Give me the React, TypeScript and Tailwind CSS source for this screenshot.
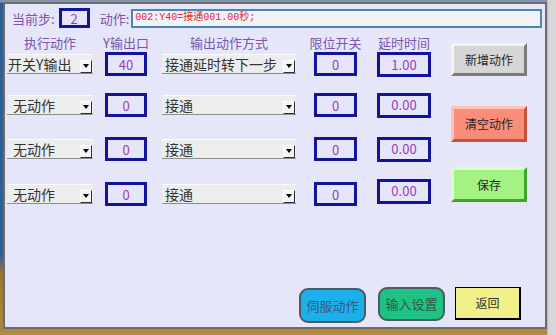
import { FC, ReactNode } from "react";

const font = "font-['Noto_Sans_CJK_SC',sans-serif]";

interface propsCombo {
  label: string;
  className: string;
  textClass?: string;
}

const Combo: FC<propsCombo> = ({ label, className, textClass = "pl-[5px]" }) => {
  return (
    <div
      className={`flex items-center h-[20px] bg-[#ededed] border-t border-t-[#fbfbfb] border-b border-b-[#8c8c8c] ${className}`}
    >
      <span className={`text-[14px] leading-none text-[#333] whitespace-nowrap ${textClass}`}>{label}</span>
      <span className="ml-auto mr-[1px] mt-[4px] w-[12px] h-[13px] flex items-center justify-center bg-[#f4f4f4] border-t border-l border-white border-r border-b border-r-[#303030] border-b-[#303030]">
        <span className="w-0 h-0 border-l-[3px] border-r-[3px] border-t-[4px] border-l-transparent border-r-transparent border-t-black" />
      </span>
    </div>
  );
};

interface propsBox {
  value: string;
  className: string;
  top?: boolean;
}

const ValueBox: FC<propsBox> = ({ value, className, top }) => {
  return (
    <div
      className={`flex justify-center border-[3px] border-[#14149a] bg-[#e6e6fa] text-[13px] leading-none text-[#9a3cb8] ${top ? "items-start pt-[2px]" : "items-center"} ${className}`}
    >
      {value}
    </div>
  );
};

const BevelButton: FC<{ children: ReactNode; className: string }> = ({ children, className }) => {
  return (
    <button className={`w-[76px] flex items-center justify-center border-[3px] ${className}`}>
      <span className="text-[12px] leading-none text-[#262626]">{children}</span>
    </button>
  );
};

const Head: FC<{ children: ReactNode; className: string }> = ({ children, className }) => {
  return <span className={`flex justify-center whitespace-nowrap ${className}`}>{children}</span>;
};

const rows = [
  { act: "开关Y输出", out: "40", mode: "接通延时转下一步", limit: "0", delay: "1.00" },
  { act: "无动作", out: "0", mode: "接通", limit: "0", delay: "0.00" },
  { act: "无动作", out: "0", mode: "接通", limit: "0", delay: "0.00" },
  { act: "无动作", out: "0", mode: "接通", limit: "0", delay: "0.00" },
];

const rowMargins = ["mt-[2px]", "mt-[15px]", "mt-[18px]", "mt-[19px]"];

export default function App() {
  return (
    <div
      className={`w-[556px] h-[335px] flex overflow-hidden bg-[linear-gradient(to_bottom,#7f95ad_0px,#7f95ad_2px,#2f5f8f_3px,#2f5f8f_255px,#9a7634_275px,#b08a40_335px)] ${font}`}
    >
      <div className="ml-[3px] mt-[2px] w-[544px] h-[327px] shrink-0 border-2 border-[#6c6c6c] bg-[#e6e6fa] flex flex-col">
        {/* top line */}
        <div className="flex items-center mt-[4px] h-[20px]">
          <span className="ml-[7px] text-[13px] text-[#7a55aa] leading-none">当前步:</span>
          <div className="ml-[4px] w-[31px] h-[20px] flex items-center justify-center border-[3px] border-[#14149a] text-[13px] leading-none text-[#9a3cb8]">
            2
          </div>
          <span className="ml-[10px] text-[13px] text-[#7a55aa] leading-none">动作:</span>
          <div className="ml-[2px] w-[411px] h-[19px] flex items-center border-2 border-[#4f86ae] bg-[#f1f1f8] pl-[2px]">
            <span className="font-['Liberation_Mono','Noto_Sans_CJK_SC',monospace] text-[10px] leading-none text-[#e02828]">
              002:Y40=接通001.00秒;
            </span>
          </div>
        </div>

        <div className="flex">
          {/* table */}
          <div className="flex flex-col">
            <div className="flex items-center h-[14px] mt-[7px] text-[13px] leading-none text-[#7a55aa]">
              <Head className="ml-[2px] w-[86px]">执行动作</Head>
              <Head className="ml-[12px] w-[42px]">Y输出口</Head>
              <Head className="ml-[15px] w-[134px]">输出动作方式</Head>
              <Head className="ml-[18px] w-[43px]">限位开关</Head>
              <Head className="ml-[20px] w-[54px]">延时时间</Head>
            </div>
            {rows.map((r, i) => (
              <div key={i} className={`flex items-center h-[26px] ${rowMargins[i]}`}>
                <Combo
                  label={r.act}
                  className="ml-[2px] w-[86px]"
                  textClass={i === 0 ? "pl-[1px]" : "pl-[6px]"}
                />
                <ValueBox value={r.out} className="ml-[12px] w-[42px] h-[24px]" />
                <Combo label={r.mode} className="ml-[15px] w-[134px]" textClass="pl-[3px]" />
                <ValueBox value={r.limit} className="ml-[18px] w-[43px] h-[24px]" />
                <ValueBox
                  value={r.delay}
                  top={i > 0}
                  className={`ml-[20px] w-[54px] h-[25px] ${i === 3 ? "mb-[6px]" : ""}`}
                />
              </div>
            ))}
          </div>

          {/* side buttons */}
          <div className="ml-[20px] flex flex-col">
            <BevelButton className="mt-[15px] h-[33px] bg-[#d6d6d6] border-t-[#f4f4f4] border-l-[#f4f4f4] border-r-[#7c7c7c] border-b-[#7c7c7c]">
              新增动作
            </BevelButton>
            <BevelButton className="mt-[30px] h-[36px] bg-[#f98d7a] border-t-[#ffc3b6] border-l-[#ffc3b6] border-r-[#c4503e] border-b-[#c4503e]">
              清空动作
            </BevelButton>
            <BevelButton className="mt-[25px] h-[35px] bg-[#a3f283] border-t-[#d8ffc8] border-l-[#d8ffc8] border-r-[#3ea42c] border-b-[#3ea42c]">
              保存
            </BevelButton>
          </div>
        </div>

        {/* bottom buttons */}
        <div className="mt-auto mb-[4px] flex items-start justify-end pr-[24px]">
          <button className="mt-[1px] w-[67px] h-[35px] rounded-[9px] border-2 border-[#4c5a64] bg-[#1cb0ea] text-[13px] text-[#3a5a7a]">
            伺服动作
          </button>
          <button className="ml-[12px] w-[67px] h-[34px] rounded-[9px] border-2 border-[#4c5a64] bg-[#1fc285] text-[13px] text-[#2f5a45]">
            输入设置
          </button>
          <button className="ml-[10px] w-[66px] h-[33px] border border-black border-r-[2px] border-b-[2px] bg-[#f2f08a] text-[12px] text-[#303030]">
            返回
          </button>
        </div>
      </div>
      <div className="flex-1 h-full bg-[linear-gradient(to_right,#b9b9b9_0px,#d6d6d6_2px,#d8d8d8_100%)]" />
    </div>
  );
}
